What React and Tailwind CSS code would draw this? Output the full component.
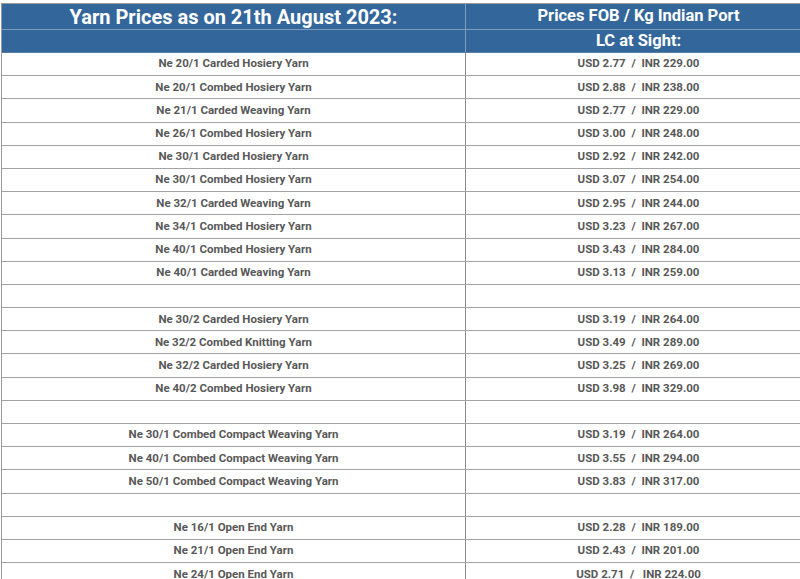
const rows = [
  ["Ne 20/1 Carded Hosiery Yarn", "USD 2.77  /  INR 229.00"],
  ["Ne 20/1 Combed Hosiery Yarn", "USD 2.88  /  INR 238.00"],
  ["Ne 21/1 Carded Weaving Yarn", "USD 2.77  /  INR 229.00"],
  ["Ne 26/1 Combed Hosiery Yarn", "USD 3.00  /  INR 248.00"],
  ["Ne 30/1 Carded Hosiery Yarn", "USD 2.92  /  INR 242.00"],
  ["Ne 30/1 Combed Hosiery Yarn", "USD 3.07  /  INR 254.00"],
  ["Ne 32/1 Carded Weaving Yarn", "USD 2.95  /  INR 244.00"],
  ["Ne 34/1 Combed Hosiery Yarn", "USD 3.23  /  INR 267.00"],
  ["Ne 40/1 Combed Hosiery Yarn", "USD 3.43  /  INR 284.00"],
  ["Ne 40/1 Carded Weaving Yarn", "USD 3.13  /  INR 259.00"],
  ["", ""],
  ["Ne 30/2 Carded Hosiery Yarn", "USD 3.19  /  INR 264.00"],
  ["Ne 32/2 Combed Knitting Yarn", "USD 3.49  /  INR 289.00"],
  ["Ne 32/2 Carded Hosiery Yarn", "USD 3.25  /  INR 269.00"],
  ["Ne 40/2 Combed Hosiery Yarn", "USD 3.98  /  INR 329.00"],
  ["", ""],
  ["Ne 30/1 Combed Compact Weaving Yarn", "USD 3.19  /  INR 264.00"],
  ["Ne 40/1 Combed Compact Weaving Yarn", "USD 3.55  /  INR 294.00"],
  ["Ne 50/1 Combed Compact Weaving Yarn", "USD 3.83  /  INR 317.00"],
  ["", ""],
  ["Ne 16/1 Open End Yarn", "USD 2.28  /  INR 189.00"],
  ["Ne 21/1 Open End Yarn", "USD 2.43  /  INR 201.00"],
  ["Ne 24/1 Open End Yarn", "USD 2.71  /   INR 224.00"],
]

// Price table row
const Row = ({ name, price }) => (
  <div className="flex h-[23.2px] border-b border-[#a3a3a3] text-[11.5px] font-bold text-[#585858]">
    <div className="w-[464px] flex items-center justify-center border-r border-[#8a8a8a]">{name}</div>
    <div className="flex-1 flex items-center justify-center whitespace-pre">{price}</div>
  </div>
)

export default function App() {
  return (
    <div className="w-[800px] h-[579px] overflow-hidden bg-white pt-[3px]" style={{ fontFamily: "Roboto, 'Liberation Sans', sans-serif" }}>
      <div className="w-[810px] ml-px border-l border-t border-[#9a9a9a]">
        <div className="bg-[#33679c] text-white font-bold">
          <div className="flex h-[26px] border-b border-[#7f9dbd]">
            <div className="w-[464px] flex items-center justify-center border-r border-[#7f9dbd] text-[20px]">
              Yarn Prices as on 21th August 2023:
            </div>
            <div className="flex-1 flex items-center justify-center text-[16.5px]">Prices FOB / Kg Indian Port</div>
          </div>
          <div className="flex h-[23px] border-b border-[#5a7da3]">
            <div className="w-[464px] border-r border-[#7f9dbd]"></div>
            <div className="flex-1 flex items-center justify-center text-[16.5px]">LC at Sight:</div>
          </div>
        </div>
        {rows.map(([name, price], i) => (
          <Row key={i} name={name} price={price} />
        ))}
      </div>
    </div>
  )
}
